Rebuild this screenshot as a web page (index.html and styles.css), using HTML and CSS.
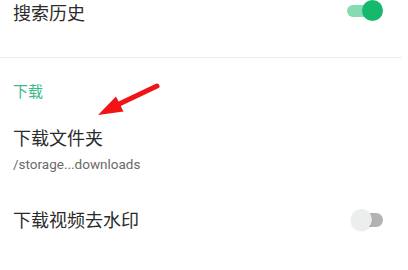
FILE: index.html
```html
<!DOCTYPE html>
<html lang="zh">
<head>
<meta charset="utf-8">
<link rel="stylesheet" href="styles.css">
</head>
<body>
<div class="page">
  <div class="row row-top">
    <span class="title">搜索历史</span>
    <span class="switch on"><span class="track"></span><span class="thumb"></span></span>
  </div>
  <div class="section">
    <div class="section-label">下载</div>
    <div class="item">
      <div class="title">下载文件夹</div>
      <div class="sub">/storage...downloads</div>
    </div>
    <div class="row row-wm">
      <span class="title">下载视频去水印</span>
      <span class="switch off"><span class="track"></span><span class="thumb"></span></span>
    </div>
  </div>
  <svg class="arrow" width="408" height="270" viewBox="0 0 408 270">
    <line x1="157" y1="86" x2="117" y2="105" stroke="#f01414" stroke-width="5" stroke-linecap="round"/>
    <polygon points="98,115 116,96.5 123.5,111.5" fill="#f01414"/>
  </svg>
</div>
</body>
</html>
```
FILE: styles.css
```css
html, body {
  margin: 0;
  padding: 0;
  background: #ffffff;
}
.page {
  position: relative;
  width: 408px;
  height: 270px;
  overflow: hidden;
  font-family: "Noto Sans CJK SC", "Noto Sans", sans-serif;
  color: #2b2b2b;
}
.row {
  display: flex;
  justify-content: space-between;
  padding: 0 25px 0 13px;
}
.title {
  font-size: 18px;
  line-height: 25px;
}
.row-top {
  height: 57px;
  align-items: flex-start;
  border-bottom: 1px solid #ececec;
  margin-right: 6px;
  padding-right: 19px;
}
.section {
  margin-right: 6px;
  border-bottom: 2px solid #efefef;
  height: 208px;
  box-sizing: border-box;
}
.section-label {
  margin: 23px 0 0 13px;
  font-size: 15px;
  line-height: 20px;
  color: #3dbb86;
}
.item {
  margin: 24px 0 0 13px;
}
.sub {
  margin-top: 5px;
  font-family: "Roboto", "Liberation Sans", sans-serif;
  font-size: 13.5px;
  line-height: 18px;
  color: #6a6a6a;
}
.row-wm {
  margin-top: 34px;
  align-items: center;
  padding-right: 19px;
}
.switch {
  position: relative;
  display: inline-block;
  width: 36px;
  height: 21px;
}
.track {
  position: absolute;
  top: 5px;
  height: 12px;
  border-radius: 6px;
}
.thumb {
  position: absolute;
  top: 0;
  width: 21px;
  height: 21px;
  border-radius: 50%;
}
.switch.on .track {
  left: 0;
  width: 32px;
  background: #85dcb3;
}
.switch.on .thumb {
  right: 0;
  background: #16b86d;
}
.switch.off .track {
  right: 0;
  width: 30px;
  top: 4px;
  height: 14px;
  border-radius: 7px;
  background: #b3b3b3;
}
.switch.off .thumb {
  left: 4px;
  background: #eceeee;
  box-shadow: 0 1px 2px rgba(0,0,0,0.12);
}
.arrow {
  position: absolute;
  left: 0;
  top: 0;
  pointer-events: none;
}
```
